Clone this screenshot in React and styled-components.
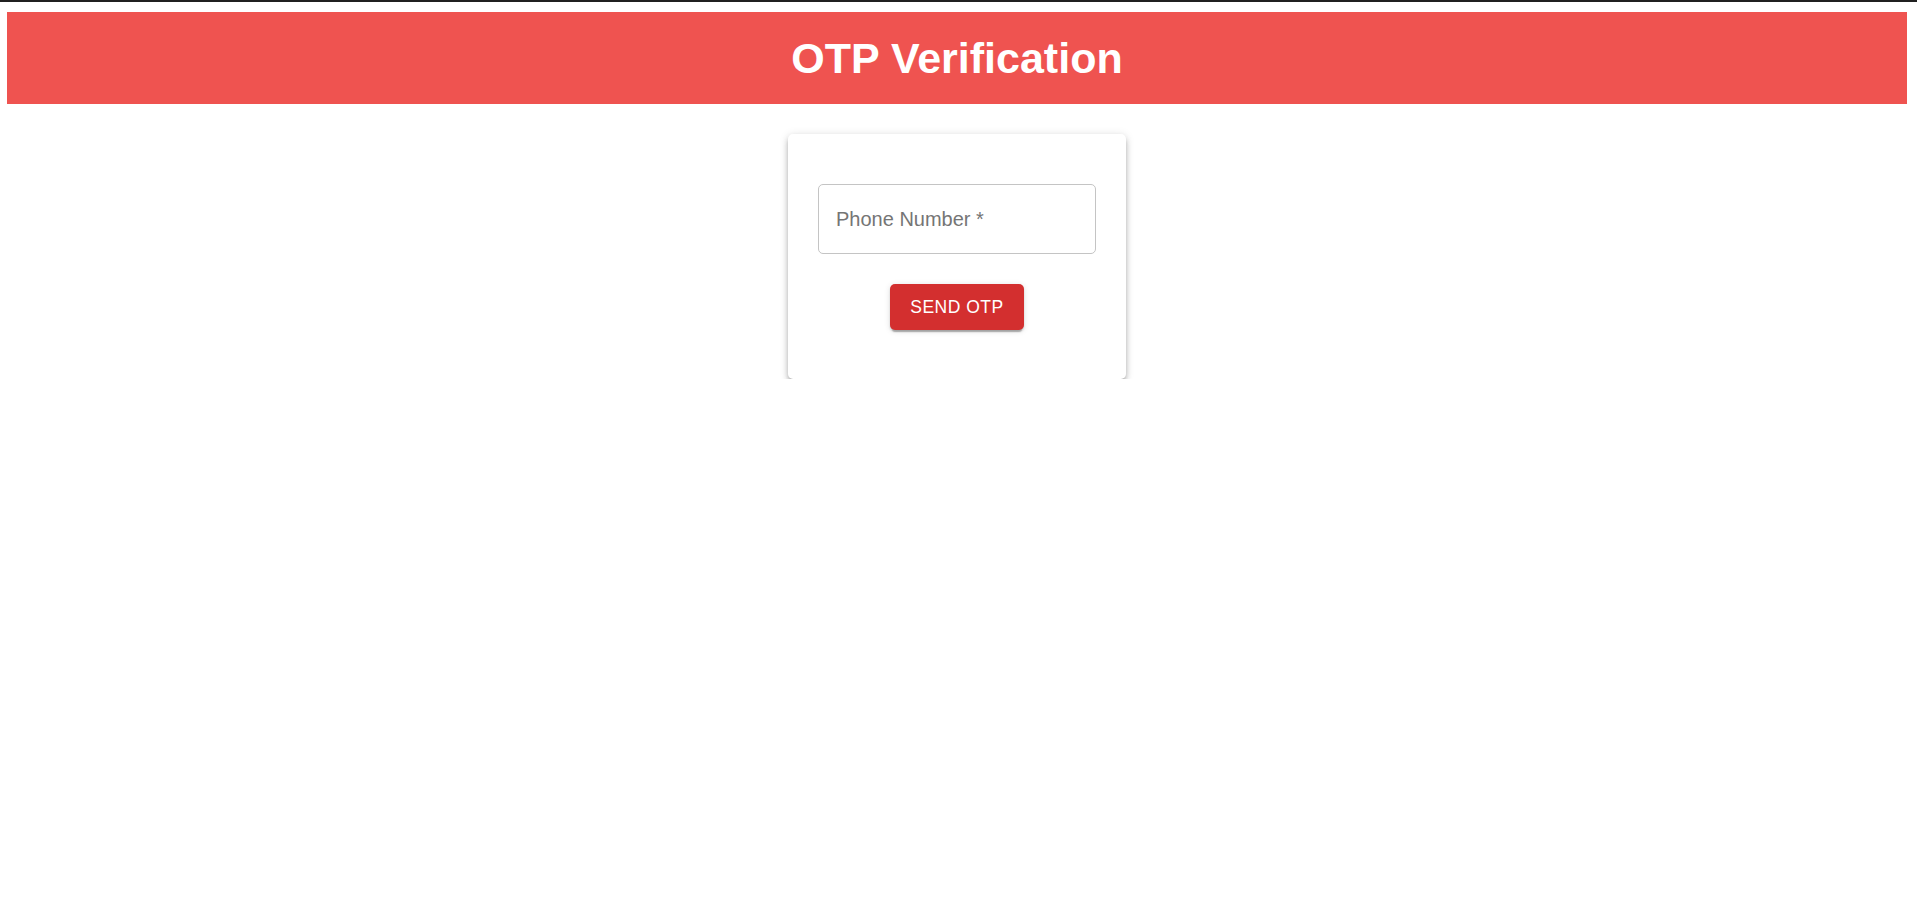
import React from 'react';
import styled, { createGlobalStyle } from 'styled-components';

const GlobalStyle = createGlobalStyle`
  html, body {
    margin: 0;
    padding: 0;
    background: #fff;
    font-family: "Liberation Sans", Arial, sans-serif;
  }
  * {
    box-sizing: border-box;
  }
`;

const TopLine = styled.div`
  height: 2px;
  background: #202020;
`;

const Page = styled.div`
  padding: 10px 10px 0 7px;
`;

const Header = styled.header`
  height: 92px;
  background: #ef5350;
  display: flex;
  align-items: center;
  justify-content: center;
`;

const Title = styled.h1`
  margin: 0;
  color: #fff;
  font-size: 43px;
  font-weight: bold;
`;

const Card = styled.div`
  width: 338px;
  margin: 30px auto 0;
  padding: 50px 30px 49px;
  background: #fff;
  border-radius: 5px;
  box-shadow: 0px 4px 4px -2px rgba(0, 0, 0, 0.25),
    0px 4px 6px 0px rgba(0, 0, 0, 0.18), 0px 1px 10px 0px rgba(0, 0, 0, 0.12);
  display: flex;
  flex-direction: column;
  align-items: center;
`;

const Field = styled.label`
  width: 278px;
  height: 70px;
  border: 1px solid #c4c4c4;
  border-radius: 5px;
  display: flex;
  align-items: center;
  padding: 0 17px;
`;

const Input = styled.input`
  width: 100%;
  border: 0;
  outline: none;
  padding: 0;
  font-family: inherit;
  font-size: 20px;
  color: #222;
  background: transparent;
  ::placeholder {
    color: #666;
    opacity: 1;
  }
`;

const Button = styled.button`
  margin-top: 30px;
  width: 134px;
  height: 46px;
  border: 0;
  border-radius: 5px;
  background: #d32f2f;
  color: #fff;
  font-family: inherit;
  font-size: 17.5px;
  letter-spacing: 0.5px;
  cursor: pointer;
  box-shadow: 0px 4px 1px -2px rgba(0, 0, 0, 0.2),
    0px 2px 2px 0px rgba(0, 0, 0, 0.14), 0px 1px 6px 0px rgba(0, 0, 0, 0.12);
`;

export default function App() {
  return (
    <>
      <GlobalStyle />
      <TopLine />
      <Page>
        <Header>
          <Title>OTP Verification</Title>
        </Header>
        <Card>
          <Field>
            <Input placeholder="Phone Number *" />
          </Field>
          <Button>SEND OTP</Button>
        </Card>
      </Page>
    </>
  );
}
